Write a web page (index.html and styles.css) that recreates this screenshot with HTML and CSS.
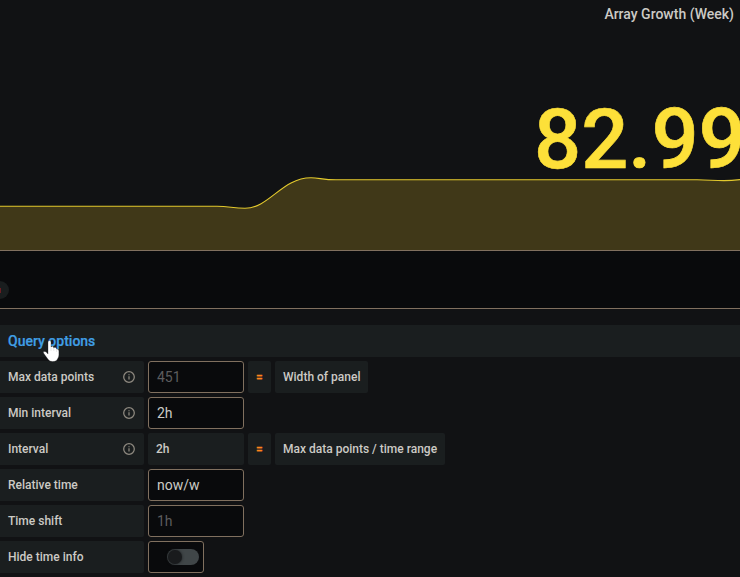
FILE: index.html
```html
<!DOCTYPE html>
<html lang="en">
<head>
<meta charset="utf-8">
<title>Array Growth (Week)</title>
<link rel="stylesheet" href="styles.css">
</head>
<body>
<section class="panel">
  <h1 class="panel-title">Array Growth (Week)</h1>
  <div class="value">82.99</div>
  <svg class="spark" width="740" height="80" viewBox="0 0 740 80">
    <path class="area" d="M0 36.3H217C229 36.3 233 38.3 245 38.3C269 38.3 282 7.8 311 7.8C319 7.8 323 9.8 336 9.8H697C708 9.8 713 10.6 724 10.6C731 10.6 735 10.2 740 9.6V80H0Z"/>
    <path class="line" d="M0 36.3H217C229 36.3 233 38.3 245 38.3C269 38.3 282 7.8 311 7.8C319 7.8 323 9.8 336 9.8H697C708 9.8 713 10.6 724 10.6C731 10.6 735 10.2 740 9.6"/>
  </svg>
</section>
<div class="tabs"><span class="badge"><i></i></span></div>
<main class="options">
  <header class="heading"><span>Query options</span>
    <svg class="cursor" width="18" height="24" viewBox="0 0 18 24"><path d="M5 2Q5 .5 6.5 .5T8 2V7Q8.5 6 9.5 6.2Q10.8 6.5 10.8 8Q11.5 7 12.5 7.4Q13.7 7.8 13.6 9Q15.9 8.5 15.9 11V15Q15.9 17 14.5 19L13.5 20.5Q12 21.6 9.5 21.6Q6.5 21.6 5.2 19.5L1 13.8Q-.2 12 1 11.5Q2.2 11 3.7 12.5L5 14Z"/><path class="creases" d="M8 7V11M10.8 8V11M13.6 9V12"/></svg>
  </header>
  <div class="row"><label class="cell label">Max data points<svg class="info" viewBox="0 0 12 12"><circle cx="6" cy="6" r="5.3"/><path d="M6 5.3V8.6M6 3.2V4.3"/></svg></label><div class="field muted">451</div><span class="cell eq">=</span><span class="cell">Width of panel</span></div>
  <div class="row"><label class="cell label">Min interval<svg class="info" viewBox="0 0 12 12"><circle cx="6" cy="6" r="5.3"/><path d="M6 5.3V8.6M6 3.2V4.3"/></svg></label><div class="field">2h</div></div>
  <div class="row"><label class="cell label">Interval<svg class="info" viewBox="0 0 12 12"><circle cx="6" cy="6" r="5.3"/><path d="M6 5.3V8.6M6 3.2V4.3"/></svg></label><span class="cell fixed">2h</span><span class="cell eq">=</span><span class="cell wide">Max data points / time range</span></div>
  <div class="row"><label class="cell label">Relative time</label><div class="field">now/w</div></div>
  <div class="row"><label class="cell label">Time shift</label><div class="field muted">1h</div></div>
  <div class="row"><label class="cell label">Hide time info</label><div class="field switch"><span class="track"><i></i></span></div></div>
</main>
</body>
</html>
```
FILE: styles.css
```css
* { box-sizing: border-box; }
body {
  margin: 0;
  width: 740px;
  height: 577px;
  overflow: hidden;
  background: #111214;
  color: #cccac5;
  font-family: Roboto, sans-serif;
}
.panel {
  height: 251px;
  border-bottom: 1px solid #80705f;
  display: flex;
  flex-direction: column;
  overflow: hidden;
}
.panel-title {
  margin: 0;
  padding-right: 6px;
  height: 28px;
  line-height: 28px;
  font-size: 14px;
  font-weight: 500;
  text-align: right;
}
.value {
  height: 142px;
  padding: 70px 0 0 534px;
  font-size: 83px;
  line-height: 84px;
  font-weight: 500;
  color: #fde039;
  -webkit-text-stroke: .6px #fde039;
  white-space: nowrap;
}
.spark { display: block; flex: none; }
.area { fill: #403818; }
.line { fill: none; stroke: #e3c92d; stroke-width: 1.1; }
.tabs {
  height: 58px;
  background: #090a0c;
  border-bottom: 1px solid #80705f;
  padding-top: 30px;
  overflow: hidden;
}
.badge {
  display: flex;
  align-items: center;
  width: 18px;
  height: 18px;
  margin-left: -9px;
  padding-left: 9px;
  border-radius: 9px;
  background: #191d1e;
}
.badge i { width: 1px; height: 5px; background: #6b1d22; }
.options { padding-top: 16px; }
.heading {
  position: relative;
  height: 32px;
  padding-left: 8px;
  margin-bottom: 4px;
  line-height: 32px;
  background: #1a1e1f;
  color: #409fe5;
  font-size: 14px;
  font-weight: 500;
  -webkit-text-stroke: .2px #409fe5;
}
.cursor { position: absolute; left: 43px; top: 15px; fill: #fff; stroke: #17191b; stroke-width: .3; }
.creases { stroke: #c8c8c8; stroke-width: .4; }
.row { display: flex; gap: 4px; height: 32px; margin-bottom: 4px; }
.cell {
  display: flex;
  align-items: center;
  height: 32px;
  padding: 0 8px;
  border-radius: 2px;
  background: #1a1e1f;
  font-size: 12px;
  font-weight: 500;
  white-space: nowrap;
}
.label { width: 144px; justify-content: space-between; border-radius: 0 2px 2px 0; }
.info { width: 12px; height: 12px; margin-right: 1px; fill: none; stroke: #8f8a80; stroke-width: 1.25; }
.fixed { width: 96px; }
.eq { width: 23px; color: #ff851b; -webkit-text-stroke: .3px #ff851b; }
.field {
  width: 96px;
  height: 32px;
  padding: 0 8px;
  border: 1px solid #80705f;
  border-radius: 3px;
  background: #090a0c;
  font-size: 14px;
  line-height: 30px;
}
.muted { color: #5c5c5e; }
.switch { display: flex; align-items: center; width: 56px; padding: 0 4px 0 18px; }
.track { display: block; width: 32px; height: 16px; border-radius: 8px; background: #404648; }
.track i {
  display: block;
  width: 14px;
  height: 14px;
  margin: 1px;
  border-radius: 50%;
  background: #191b1d;
  box-shadow: 0 0 3px #191b1d;
}
```
